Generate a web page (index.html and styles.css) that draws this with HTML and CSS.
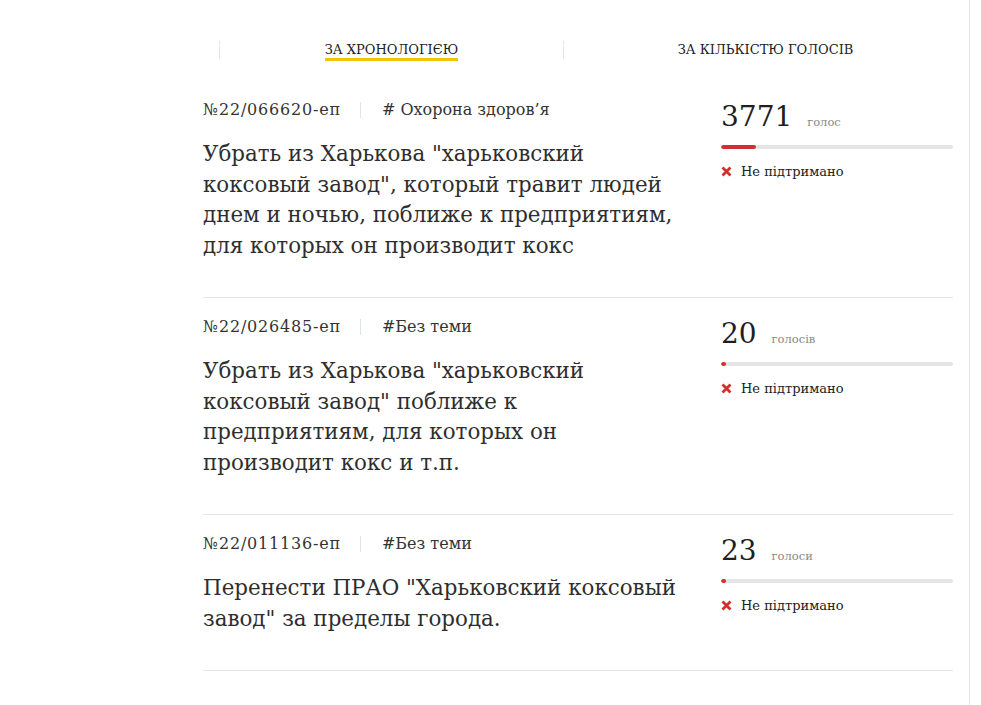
FILE: index.html
```
<!DOCTYPE html>
<html lang="uk">
<head>
    <meta charset="UTF-8">
    <meta name="viewport" content="width=device-width, initial-scale=1.0">
    <title>Петиції</title>
    <link rel="stylesheet" href="styles.css">
</head>
<body>

    <div class="page">
        <div class="content">

            <!-- Sorting tabs -->
            <div class="tabs">
                <div class="tab"><a href="#" class="active">За хронологією</a></div>
                <div class="tab"><a href="#">За кількістю голосів</a></div>
            </div>

            <!-- Petition list -->
            <div class="petition">
                <div class="petition-main">
                    <div class="meta">
                        <span class="number">№22/066620-еп</span>
                        <span class="tag"># Охорона здоров’я</span>
                    </div>
                    <a href="#" class="title">Убрать из Харькова "харьковский коксовый завод", который травит людей днем и ночью, поближе к предприятиям, для которых он производит кокс</a>
                </div>
                <div class="petition-votes">
                    <div class="count">3771 <span class="count-label">голос</span></div>
                    <div class="progress"><div class="progress-fill" style="width: 15%"></div></div>
                    <div class="state">
                        <svg class="state-icon" width="11" height="11" viewBox="0 0 11 11"><path d="M1.5 1.5 L9.5 9.5 M9.5 1.5 L1.5 9.5" stroke="#d0312d" stroke-width="2.8"/></svg>
                        Не підтримано
                    </div>
                </div>
            </div>

            <div class="petition">
                <div class="petition-main">
                    <div class="meta">
                        <span class="number">№22/026485-еп</span>
                        <span class="tag">#Без теми</span>
                    </div>
                    <a href="#" class="title">Убрать из Харькова "харьковский коксовый завод" поближе к предприятиям, для которых он производит кокс и т.п.</a>
                </div>
                <div class="petition-votes">
                    <div class="count">20 <span class="count-label">голосів</span></div>
                    <div class="progress"><div class="progress-fill" style="width: 2%"></div></div>
                    <div class="state">
                        <svg class="state-icon" width="11" height="11" viewBox="0 0 11 11"><path d="M1.5 1.5 L9.5 9.5 M9.5 1.5 L1.5 9.5" stroke="#d0312d" stroke-width="2.8"/></svg>
                        Не підтримано
                    </div>
                </div>
            </div>

            <div class="petition">
                <div class="petition-main">
                    <div class="meta">
                        <span class="number">№22/011136-еп</span>
                        <span class="tag">#Без теми</span>
                    </div>
                    <a href="#" class="title">Перенести ПРАО "Харьковский коксовый завод" за пределы города.</a>
                </div>
                <div class="petition-votes">
                    <div class="count">23 <span class="count-label">голоси</span></div>
                    <div class="progress"><div class="progress-fill" style="width: 2%"></div></div>
                    <div class="state">
                        <svg class="state-icon" width="11" height="11" viewBox="0 0 11 11"><path d="M1.5 1.5 L9.5 9.5 M9.5 1.5 L1.5 9.5" stroke="#d0312d" stroke-width="2.8"/></svg>
                        Не підтримано
                    </div>
                </div>
            </div>

        </div>
    </div>

</body>
</html>
```

FILE: styles.css
```
body {
    font-family: 'DejaVu Serif', 'Liberation Serif', serif;
    color: #333;
    background-color: #fff;
    margin: 0;
}
a {
    color: inherit;
    text-decoration: none;
}
.page {
    width: 969px;
    min-height: 100vh;
    border-right: 1px solid #e6e6e6;
}
.content {
    width: 750px;
    padding-left: 203px;
}
.tabs {
    display: grid;
    grid-template-columns: 344px 404px;
    margin: 0 0 22px 16px;
    padding-top: 41px;
}
.tab {
    border-left: 1px solid #e6e6e6;
    height: 18px;
    text-align: center;
    font-size: 13px;
    line-height: 17px;
    text-transform: uppercase;
}
.tab a {
    display: inline-block;
    color: #222;
}
.tab a.active {
    border-bottom: 3px solid #f5c400;
}
.petition {
    display: grid;
    grid-template-columns: 1fr 232px;
    gap: 30px;
    padding: 18px 0 36px;
    border-bottom: 1px solid #e6e6e6;
}
.meta {
    display: flex;
    align-items: center;
    font-size: 16px;
    line-height: 22px;
    color: #333;
}
.number {
    letter-spacing: 0.8px;
}
.tag {
    border-left: 1px solid #dde3ea;
    margin-left: 19px;
    padding-left: 21px;
    line-height: 16px;
}
.title {
    display: block;
    width: 476px;
    margin-top: 18px;
    font-size: 21.4px;
    line-height: 30.5px;
    color: #2e2e2e;
}
.petition-votes {
    padding-top: 2px;
}
.count {
    font-size: 28px;
    line-height: 32px;
    color: #1f1f1f;
}
.count-label {
    font-size: 11.5px;
    color: #888;
    margin-left: 6px;
}
.progress {
    height: 4px;
    margin-top: 7px;
    background-color: #e5e5e5;
    border-radius: 2px;
    overflow: hidden;
}
.progress-fill {
    height: 100%;
    min-width: 5px;
    background-color: #d0312d;
    border-radius: 2px;
}
.state {
    display: flex;
    align-items: center;
    gap: 9px;
    margin-top: 15px;
    font-size: 13px;
    color: #222;
}
```
